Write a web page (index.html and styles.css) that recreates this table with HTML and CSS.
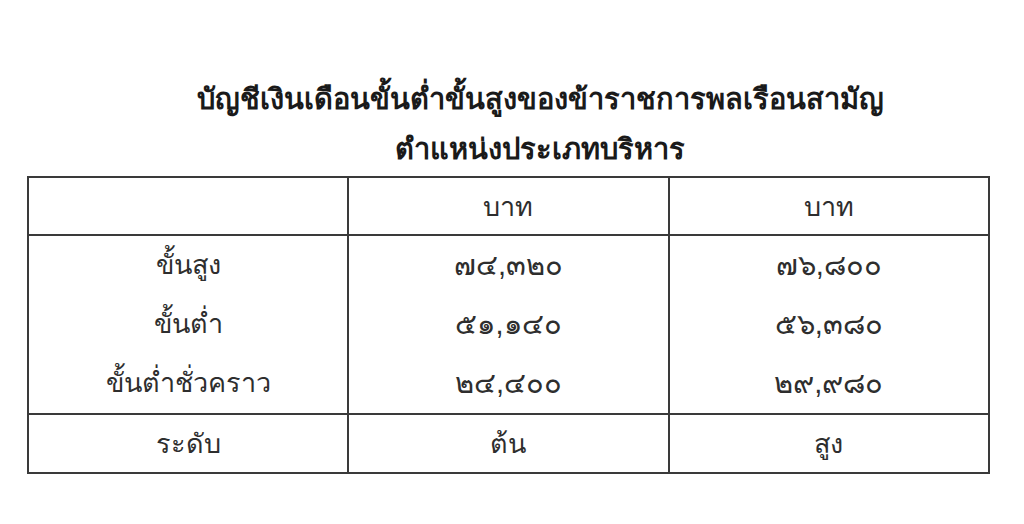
FILE: index.html
```html
<!DOCTYPE html>
<html lang="th">
<head>
<meta charset="utf-8">
<title>บัญชีเงินเดือน</title>
<link rel="stylesheet" href="styles.css">
</head>
<body>
<div class="page">
  <div class="title">
    <div class="title-line">บัญชีเงินเดือนขั้นต่ำขั้นสูงของข้าราชการพลเรือนสามัญ</div>
    <div class="title-line">ตำแหน่งประเภทบริหาร</div>
  </div>
  <table class="salary">
    <tr class="head">
      <td></td>
      <td>บาท</td>
      <td>บาท</td>
    </tr>
    <tr class="body">
      <td><div class="ln">ขั้นสูง</div><div class="ln">ขั้นต่ำ</div><div class="ln">ขั้นต่ำชั่วคราว</div></td>
      <td class="num"><div class="ln">๗๔,๓๒๐</div><div class="ln">๕๑,๑๔๐</div><div class="ln">๒๔,๔๐๐</div></td>
      <td class="num"><div class="ln">๗๖,๘๐๐</div><div class="ln">๕๖,๓๘๐</div><div class="ln">๒๙,๙๘๐</div></td>
    </tr>
    <tr class="foot">
      <td>ระดับ</td>
      <td>ต้น</td>
      <td>สูง</td>
    </tr>
  </table>
</div>
</body>
</html>
```
FILE: styles.css
```css
html, body {
  margin: 0;
  padding: 0;
  background: #ffffff;
}
body {
  font-family: "Liberation Sans", "DejaVu Sans", sans-serif;
  color: #222;
}
.page {
  width: 1024px;
  height: 524px;
  overflow: hidden;
}
.title {
  padding-top: 74px;
  padding-left: 56px;
  text-align: center;
  font-weight: bold;
  font-size: 29px;
  color: #1a1a1a;
}
.title-line {
  height: 50px;
  line-height: 50px;
}
.salary {
  margin-left: 27px;
  margin-top: 2px;
  border-collapse: collapse;
  width: 963px;
  table-layout: fixed;
  font-size: 27px;
  color: #2e2e2e;
}
.salary td {
  border: 2px solid #3a3a3a;
  text-align: center;
  padding: 0;
  vertical-align: middle;
}
.salary td.num {
  font-size: 29px;
}
.salary tr.head td {
  height: 56px;
}
.salary tr.body td {
  height: 177px;
}
.salary tr.foot td {
  height: 57px;
}
.ln {
  height: 59px;
  line-height: 59px;
}
```
